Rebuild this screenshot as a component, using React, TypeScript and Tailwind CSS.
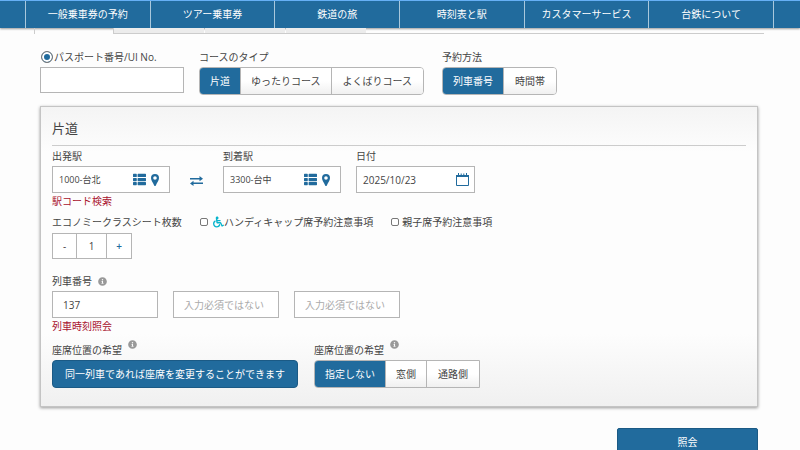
import { useState } from 'react'
import type { ReactNode } from 'react'
import { FaInfoCircle, FaThList, FaWheelchair } from 'react-icons/fa'

const navItems = [
  '一般乗車券の予約',
  'ツアー乗車券',
  '鉄道の旅',
  '時刻表と駅',
  'カスタマーサービス',
  '台鉄について',
]

function CalendarIcon() {
  return (
    <svg viewBox="0 0 13 13" className="h-[13px] w-[13px]" fill="none" stroke="currentColor">
      <path d="M.5 3.5v9h12v-9" />
      <path d="M0 3h13" strokeWidth="2" />
      <path d="M2.5 0v3M5.2 0.5v2M7.8 0.5v2M10.5 0v3" />
    </svg>
  )
}

function PinIcon() {
  return (
    <svg viewBox="0 0 8 12" className="h-3 w-2" fill="currentColor">
      <path
        fillRule="evenodd"
        d="M4 0a4 4 0 0 1 4 4c0 2.2-1.8 4.6-3.2 7.4-.3.8-1.3.8-1.6 0C1.8 8.6 0 6.200 0 4a4 4 0 0 1 4-4zm0 2.200a1.800 1.800 0 1 0 0 3.600a1.800 1.800 0 0 0 0-3.600z"
      />
    </svg>
  )
}

function SwapIcon() {
  return (
    <svg viewBox="0 0 13 10" className="h-[10px] w-[13px]" fill="currentColor">
      <path d="M0 2h9.500V0L13 2.800 9.500 5.200V3.600H0z" />
      <path d="M13 6.400H3.500V4.800L0 7.400 3.500 10V8H13z" />
    </svg>
  )
}

interface ButtonGroupProps {
  label: string
  options: string[]
  square?: boolean
}

function ButtonGroup({ label, options, square = false }: ButtonGroupProps) {
  const [selected, setSelected] = useState(options[0])

  return (
    <div
      role="group"
      aria-label={label}
      className={`flex h-7 overflow-hidden rounded-l border border-[#b5b5b5] ${square ? '' : 'rounded-r'}`}
    >
      {options.map((option) => (
        <button
          key={option}
          type="button"
          aria-pressed={option === selected}
          onClick={() => setSelected(option)}
          className={`px-[10px] border-r border-[#b5b5b5] last:border-r-0 last:px-[11px] whitespace-nowrap ${
            option === selected
              ? 'bg-[#216b9d] text-white'
              : 'bg-linear-to-b from-white via-white to-[#f0f0f0]'
          }`}
        >
          {option}
        </button>
      ))}
    </div>
  )
}

interface StationFieldProps {
  id: string
  label: string
  value: string
  children?: ReactNode
}

function StationField({ id, label, value, children }: StationFieldProps) {
  return (
    <div className="w-[118px]">
      <label htmlFor={id} className="block">{label}</label>
      <div className="mt-[2px] flex h-[27px] items-center border border-[#b5b5b5] bg-white pl-[6px] pr-[10px]">
        <input id={id} defaultValue={value} className="min-w-0 flex-1 bg-transparent text-[9px] outline-none" />
        <button type="button" aria-label="駅一覧" className="text-[#216b9d]">
          <FaThList className="h-[13px] w-[13px]" />
        </button>
        <button type="button" aria-label="地図" className="ml-[5px] text-[#216b9d]">
          <PinIcon />
        </button>
      </div>
      {children}
    </div>
  )
}

function SeatLabel() {
  return (
    <div className="mb-[2px] flex gap-[6px]">
      座席位置の希望
      <FaInfoCircle className="-mt-[2px] h-[9px] w-[9px] text-[#999]" />
    </div>
  )
}

export default function App() {
  const [count, setCount] = useState(1)

  return (
    <div className="h-screen overflow-hidden bg-[#fdfdfd] font-['Open_Sans','Noto_Sans_CJK_JP',sans-serif] text-[10px] leading-4 text-[#444]">
      <nav className="border-t border-[#66b0f5] bg-[#216b9d] pl-[25px] pr-[26px] shadow-[0_1px_2px_rgba(0,0,0,0.4)]">
        <ul className="flex border-l border-[#a9c8dc]">
          {navItems.map((item) => (
            <li key={item} className="flex-1 border-r border-[#a9c8dc]">
              <a href="#" className="flex h-[27px] items-center justify-center whitespace-nowrap pb-[2px] text-white">
                {item}
              </a>
            </li>
          ))}
        </ul>
      </nav>

      <main className="pl-[34px] pr-9">
        <div className="flex h-[6px]">
          <div className="w-20 border-x border-[#ccc]" />
          <div className="flex flex-1 gap-px border-b border-[#ccc]">
            <div className="w-[90px] bg-[#ececec]" />
            <div className="w-20 bg-[#ececec]" />
            <div className="w-20 bg-[#ececec]" />
          </div>
        </div>

        <form className="px-[6px]" onSubmit={(e) => e.preventDefault()}>
          <div className="mt-[15px] flex items-start">
            <div className="w-36">
              <div className="flex items-center">
                <input
                  id="id-type"
                  type="radio"
                  defaultChecked
                  className="mx-px h-3 w-3 appearance-none rounded-full border border-[#777] bg-[#216b9d] shadow-[inset_0_0_0_2px_white]"
                />
                <label htmlFor="id-type" className="whitespace-nowrap">パスポート番号/UI No.</label>
              </div>
              <input
                aria-label="パスポート番号/UI No."
                className="mt-[2px] block h-[26px] w-full border border-[#b5b5b5] bg-white px-2"
              />
            </div>
            <div className="ml-[15px]">
              <div className="mb-[2px]">コースのタイプ</div>
              <ButtonGroup label="コースのタイプ" options={['片道', 'ゆったりコース', 'よくばりコース']} />
            </div>
            <div className="ml-[18px]">
              <div className="mb-[2px]">予約方法</div>
              <ButtonGroup label="予約方法" options={['列車番号', '時間帯']} />
            </div>
          </div>

          <section className="mt-[11px] border border-[#c4c4c4] bg-linear-to-b from-[#f4f4f4] via-[#fdfdfd] via-15% to-[#fdfdfd] px-[11px] shadow-[0_1px_3px_rgba(0,0,0,0.4)]">
            <h2 className="border-b border-[#ccc] pb-[7px] pt-[11px] text-[13px] leading-5">片道</h2>

            <div className="mt-[2px] flex items-start">
              <StationField id="from" label="出発駅" value="1000-台北">
                <a href="#" className="block text-[#a8112d]">駅コード検索</a>
              </StationField>
              <button type="button" aria-label="入れ替え" className="mx-5 mt-[28px] text-[#216b9d]">
                <SwapIcon />
              </button>
              <StationField id="to" label="到着駅" value="3300-台中" />
              <div className="ml-[15px] w-[119px]">
                <label htmlFor="date" className="block">日付</label>
                <div className="mt-[2px] flex h-[27px] items-center border border-[#b5b5b5] bg-white pl-[6px] pr-[5px]">
                  <input id="date" defaultValue="2025/10/23" className="min-w-0 flex-1 bg-transparent outline-none" />
                  <button type="button" aria-label="カレンダー" className="text-[#216b9d]">
                    <CalendarIcon />
                  </button>
                </div>
              </div>
            </div>

            <div className="mt-[5px] flex items-center">
              <label htmlFor="seats" className="w-[148px]">エコノミークラスシート枚数</label>
              <label className="flex items-center whitespace-nowrap">
                <input type="checkbox" className="mr-[5px] h-2 w-2 appearance-none rounded-xs border border-[#777] bg-white checked:bg-[#216b9d]" />
                <FaWheelchair className="h-3 w-[11px] text-[#08b4cc]" />
                ハンディキャップ席予約注意事項
              </label>
              <label className="ml-[18px] flex items-center whitespace-nowrap">
                <input type="checkbox" className="mr-[3px] h-2 w-2 appearance-none rounded-xs border border-[#777] bg-white checked:bg-[#216b9d]" />
                親子席予約注意事項
              </label>
            </div>

            <div className="mt-[3px] flex h-[26px] w-20 border border-[#b5b5b5] bg-white">
              <button type="button" className="w-[23px]" onClick={() => setCount(Math.max(0, count - 1))}>-</button>
              <input id="seats" value={count} readOnly className="min-w-0 flex-1 border-x border-[#b5b5b5] text-center" />
              <button type="button" className="w-6 font-semibold text-[#216b9d]" onClick={() => setCount(count + 1)}>+</button>
            </div>

            <div className="mt-[14px] flex items-center gap-[6px]">
              <label htmlFor="train-1">列車番号</label>
              <FaInfoCircle className="h-[9px] w-[9px] text-[#999]" />
            </div>
            <div className="mt-[2px] flex gap-[15px]">
              <input id="train-1" defaultValue="137" className="h-[27px] w-[106px] border border-[#b5b5b5] bg-white px-[10px]" />
              <input aria-label="列車番号 2" placeholder="入力必須ではない" className="h-[27px] w-[106px] border border-[#b5b5b5] bg-white px-[10px] placeholder:text-[#aaa]" />
              <input aria-label="列車番号 3" placeholder="入力必須ではない" className="h-[27px] w-[106px] border border-[#b5b5b5] bg-white px-[10px] placeholder:text-[#aaa]" />
            </div>
            <a href="#" className="block w-fit text-[#a8112d]">列車時刻照会</a>

            <div className="-mx-[11px] flex bg-linear-to-b from-[#fdfdfd] to-[#f0f0f0] px-[11px] pb-[18px] pt-2">
              <div>
                <SeatLabel />
                <button type="button" className="h-7 rounded border border-[#1b5a85] bg-[#216b9d] px-3 text-white">
                  同一列車であれば座席を変更することができます
                </button>
              </div>
              <div className="ml-4">
                <SeatLabel />
                <ButtonGroup label="座席位置の希望" options={['指定しない', '窓側', '通路側']} square />
              </div>
            </div>
          </section>

          <div className="mt-[21px] flex justify-end">
            <button type="submit" className="h-7 w-[141px] rounded-xs border border-[#1b5a85] bg-[#216b9d] text-white">
              照会
            </button>
          </div>
        </form>
      </main>
    </div>
  )
}
